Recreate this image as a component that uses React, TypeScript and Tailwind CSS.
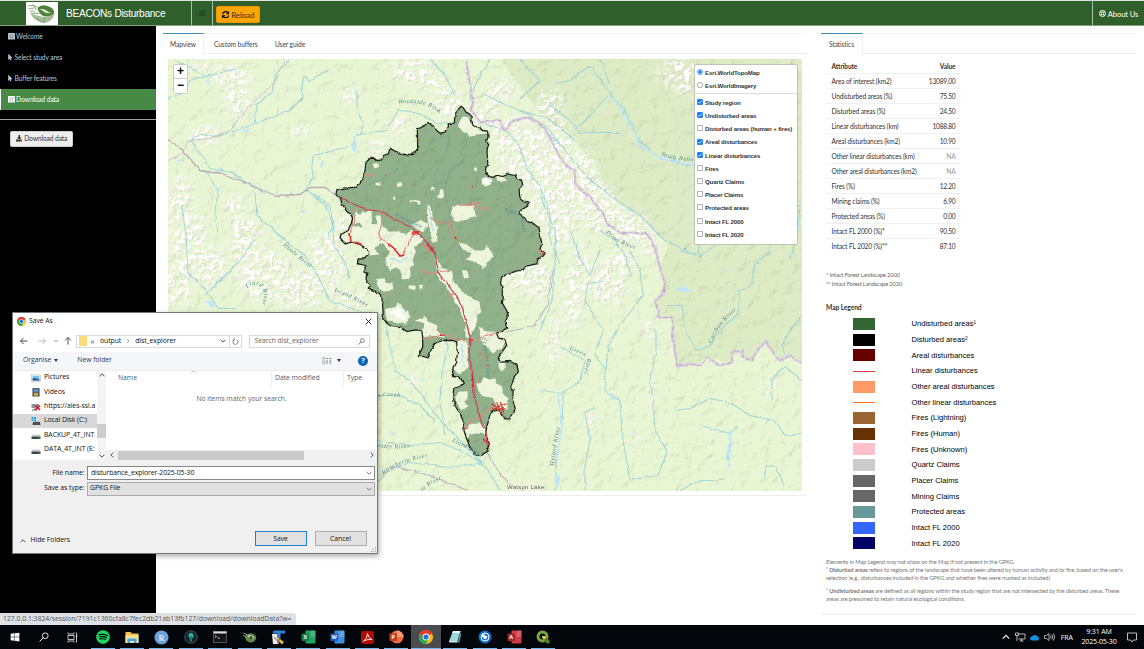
import React from "react";
import {
  FaBars,
  FaDownload,
  FaMousePointer,
  FaRegLifeRing,
  FaSpotify,
  FaSync,
  FaWindows,
} from "react-icons/fa";

const LATO = "font-['Lato','Noto_Sans',sans-serif]";
const SEGOE = "font-['Open_Sans','Noto_Sans',sans-serif]";
const ARIAL = "font-['Liberation_Sans',Arial,sans-serif]";

/* ---------- map ---------- */

const REGION =
  "423,47 430,52 438,65 448,70 457,80 452,90 456,102 470,112 480,112 488,120 503,122 504,140 500,150 506,165 501,180 503,215 508,225 497,230 497,250 510,258 517,262 530,254 548,258 565,251 585,255 592,265 605,270 608,285 597,298 600,322 612,332 630,335 622,348 605,356 598,370 612,378 620,392 640,400 657,412 662,440 665,460 660,478 675,490 668,498 655,505 650,520 620,527 605,540 585,543 560,550 545,563 541,580 550,590 543,605 550,620 547,638 560,660 565,675 555,695 560,710 545,725 530,727 535,742 555,748 560,765 548,782 535,802 545,815 570,813 590,820 595,842 582,860 575,885 570,892 580,900 578,920 588,950 580,970 568,985 555,985 543,965 530,957 520,960 510,975 500,1010 497,1030 503,1048 508,1060 500,1085 485,1092 472,1095 462,1090 450,1070 440,1045 432,1020 433,1000 420,970 405,945 400,920 405,892 418,888 430,878 420,860 398,858 395,845 410,815 412,785 410,755 400,750 370,750 345,758 335,775 325,802 310,798 295,798 308,770 308,740 305,720 290,718 260,723 245,712 215,708 200,698 190,682 188,645 185,615 165,602 145,593 150,585 140,575 143,548 135,545 135,525 112,520 115,505 130,505 147,490 140,475 120,462 105,457 92,455 75,460 60,445 63,432 85,420 98,385 85,365 65,340 62,320 48,312 50,298 70,293 110,290 120,275 132,262 138,215 155,200 168,210 185,208 190,195 205,190 210,173 225,182 250,192 280,192 293,178 292,115 308,110 325,95 345,115 360,128 375,125 385,100 403,98 405,70";

const CLEARINGS = [
  "415,95 430,78 445,80 452,98 470,115 485,122 503,122 500,130 470,132 450,138 430,125 418,110",
  "158,220 172,218 175,230 162,234",
  "231,276 243,276 243,289 231,288",
  "169,277 183,276 182,285 170,285",
  "219,319 227,319 227,328 220,328",
  "270,329 300,331 302,342 292,342 290,336 270,336",
  "462,231 471,231 471,242 461,241",
  "335,288 344,290 344,301 335,299",
  "350,318 358,312 360,296 370,296 372,322 358,325",
  "323,346 335,350 338,380 351,410 352,450 338,458 328,410 320,370",
  "397,350 415,343 462,345 467,375 440,388 410,394 401,390 393,370",
  "485,265 500,258 515,268 512,282 498,288 486,278",
  "530,256 555,262 562,270 545,275 530,268",
  "98,385 110,358 120,378 126,364 155,361 156,400 168,402 168,378 182,378 184,402 195,408 205,423 240,423 260,433 275,418 300,430 307,450 282,472 288,482 278,508 282,522 270,532 272,565 245,566 245,540 225,530 210,542 196,510 210,484 180,457 165,474 178,492 147,495 135,470 105,457 92,455 66,456 61,445 63,432 85,420 92,405 130,412 118,395 100,402",
  "275,402 300,392 323,395 325,412 308,425 290,415",
  "415,455 440,462 465,480 490,480 500,463 517,490 522,500 500,517 490,537 470,517 440,507 455,488 430,480",
  "345,495 364,530 396,542 402,575 420,594 446,618 478,636 484,665 470,675 474,692 460,722 446,745 436,738 436,700 420,660 402,625 380,590 352,558",
  "195,655 225,650 235,635 250,655 272,675 258,702 220,692 200,690",
  "288,690 318,676 324,692 352,705 350,720 377,742 340,736 310,740 306,718 313,700",
  "265,585 285,585 282,597 267,595",
  "298,583 308,583 308,595 298,594",
  "168,565 197,563 197,577 222,580 217,600 188,604 173,590",
  "410,752 442,752 445,830 420,852 403,838 410,800",
  "478,710 500,723 522,723 537,745 557,750 547,772 520,788 498,765 483,752",
  "468,878 483,878 490,860 512,868 527,863 528,878 547,888 548,908 562,923 563,958 533,952 518,922 488,917 476,902",
  "406,920 418,903 443,903 443,925 432,937 448,946 425,960 408,938",
  "450,1000 490,1000 498,1030 475,1025 450,1035 440,1045 433,1020",
  "535,815 555,815 558,830 545,842 536,832",
  "425,538 442,540 447,562 432,564",
];

const RIVERS_A = [
  "M110,0 L112,60 Q150,130 104,135 L100,165 L60,175 L20,185 L-20,195 L-25,230 L-20,260 L-45,300 L0,320 L30,350 L40,400 L25,440",
  "M104,135 L200,120 Q215,90 235,60 Q300,60 350,100 L385,95",
  "M330,160 L390,130 L385,170 L345,250 L342,290 L330,350 L340,400 L335,450 L345,485",
  "M415,180 L440,200 L390,240 L375,290 L385,350 L395,390 L400,430 L420,460 L430,520 L440,580",
  "M240,230 L200,260 L150,280 L135,300 L160,350",
  "M490,10 L550,40 L620,70 L680,110 L720,160",
  "M480,95 L560,120 L600,170 L620,230 L660,290 L690,370 L690,450 L720,520",
  "M560,290 L575,260 M550,330 L590,380 L600,440 L560,480 L530,490 L500,560",
  "M180,490 L250,520 L280,540 M220,520 L260,560",
];

const RIVERS_PAGE = [
  "M290,59 L276,72 L272,92 L257,104 L254,124 L218,136 L200,134 L188,141",
  "M254,124 L275,115 L290,110 L302,98 L303,75 L310,80 L330,68",
  "M168,98 L185,92 L190,80 L205,76 L232,70",
  "M175,60 L205,75",
  "M192,141 L205,160 L210,168 L232,172 L250,185 L265,193",
  "M205,170 L218,190 L215,220 L218,232",
  "M255,192 L257,215 L285,240 L305,255 L318,275 L330,300 L385,320 L395,370 L410,380 L440,420 L460,440 L487,468 L500,490",
  "M182,205 L186,235 L188,273 L205,288 L218,308 L235,308",
  "M205,295 L240,260 L254,240",
  "M308,190 L325,205 L333,225 L334,245 L345,262 L350,278",
  "M378,395 L400,395 L420,405 L435,420",
  "M378,440 L410,445 L440,442 L465,452 L485,465",
  "M378,475 L410,462 L450,467 L485,462",
  "M420,302 L430,310 L448,345 L442,372 L440,400 L445,435",
  "M520,59 L540,80 L520,98",
  "M555,83 L570,80 L590,65 L612,95 L625,110 L640,140 L655,155 L685,165 L720,160",
  "M600,59 L610,85 M550,105 L570,120 L580,132 L620,132 M608,95 L590,115 L575,130",
  "M540,125 L565,150 L585,175 L610,195 L640,215 L665,240 L700,256 L720,240 L760,225",
  "M540,195 L555,230 L556,250 L552,300 L540,330",
  "M570,230 L580,258 L590,275 L600,250 M604,281 L588,283 L585,300 L603,330 L595,355 L605,368 L605,390 L620,400 L622,435 L630,479 L658,475 L667,450 L655,430 L652,390 L650,378 L656,350 L656,330 L650,328",
  "M630,250 L640,270 L643,295 L620,325 L608,345 L606,370",
  "M600,230 L615,240 L625,255 L631,275",
  "M680,250 L697,255 L700,240 M770,250 L755,265 L752,285 L740,290 L738,313 L720,330 L710,346 L697,350 L685,330 L682,305 L665,305",
  "M802,315 L790,330 L782,345 L786,355",
  "M676,410 L690,408 L710,398 L730,402 L750,415 L775,420 L785,435 L802,433",
  "M704,426 L730,433 L737,425",
  "M540,390 L563,393 L562,425 L556,460 L556,490",
  "M563,393 L580,380 L585,360 L560,346",
  "M585,490 L585,465 L590,440 L585,412 L595,407",
  "M680,490 L700,480 L715,480 L725,478 M765,480 L766,465 L777,467 L784,485",
  "M772,400 L772,378 L785,366 L802,380",
  "M470,100 L475,85 L480,75 L490,59 M520,110 L548,118 L575,140",
  "M800,200 L798,230 L790,260 M430,59 L445,75 L455,95",
];

const LAKES =
  "M354,140 L357,140 L356,152 L353,150 Z M352,80 l4,4 l-3,1z M213,185 l8,4 l-2,3z M206,80 l4,-2 l-2,8z M240,130 l10,-2 l-2,4z M228,70 l6,-3 l2,3z M219,165 l5,4 l-4,1z M729,432 l3,-3 l-1,20 l-3,25 l-1,-16z M556,470 l4,10 l-2,8 l-3,-8z M675,288 l8,-2 l12,6 l-14,-1z M720,262 l8,10 l-3,-2z M725,305 l2,4 l-3,1z M240,108 l4,3 l-2,2z M176,158 l6,2 l-3,2z M300,212 l6,-4 l-2,5z M320,164 l4,-6 l-1,8z M205,300 l12,4 l-6,4z M420,376 l6,5 l-4,-1z M610,395 l8,3 l-7,1z M452,228 l3,2 l2,16 l-3,-8z M430,233 l2,12 l-2,-4z M390,430 l5,3 l-4,1z M460,305 l3,14 l-2,-2z";

const PEAKS: [number, number, number, number][] = [
  [232, 75, 22, 10], [238, 100, 13, 18], [200, 66, 14, 5], [205, 135, 16, 10],
  [180, 200, 12, 25], [188, 240, 18, 30], [210, 265, 16, 20], [178, 285, 14, 22],
  [245, 240, 16, 26], [265, 275, 30, 26], [235, 205, 10, 10], [300, 290, 24, 20], [320, 250, 12, 16],
  [330, 262, 14, 30], [345, 225, 8, 14], [300, 130, 10, 8], [410, 70, 22, 12], [430, 82, 20, 8], [450, 103, 14, 16],
  [350, 95, 10, 8], [400, 125, 12, 10], [378, 145, 10, 8], [485, 118, 14, 18], [500, 90, 14, 12], [515, 140, 20, 26], [540, 160, 22, 32],
  [515, 165, 16, 12], [545, 198, 16, 28], [560, 150, 14, 30], [580, 180, 18, 30], [600, 210, 22, 26], [628, 225, 22, 16], [650, 245, 10, 12],
  [560, 218, 14, 30], [580, 270, 10, 28], [608, 285, 18, 22], [572, 300, 10, 30], [553, 340, 6, 28], [620, 260, 14, 14],
  [520, 270, 14, 24], [540, 280, 10, 20], [680, 72, 22, 14], [690, 88, 14, 8], [771, 387, 5, 12], [648, 330, 5, 12], [795, 62, 10, 4], [550, 105, 14, 16],
  [650, 395, 4, 12], [636, 440, 3, 16], [590, 420, 4, 12], [390, 302, 10, 6], [397, 313, 8, 6], [410, 380, 10, 6], [350, 300, 14, 12],
];

const BOUNDARY =
  "M466,59 L473,102 L472,110 L480,122 L500,120 L505,130 L513,120 L527,117 L540,122 L550,137 L562,160 L570,168 L575,170 L575,183 L590,197 L603,213 L607,223 L620,232 L647,233 L655,247 L660,267 L665,283 L663,293 L656,300 L659,317 L672,317 L673,333 L675,353 L678,366 L690,363 L700,365 L707,357 L720,365 L732,362 L732,352 L743,350 L743,357 L752,360 L757,350 L766,341 L773,352 L780,360 L790,355 L802,363";

const ROADS = "65,322 85,335 110,345 145,358 182,362 230,390 270,410 295,430 320,455 345,485 350,520 360,555 385,585 400,602 425,645 440,700 450,740 447,790 458,850 462,910 475,960 485,1000 500,1030 500,1060";

const MINOR_RED = [
  "105,345 103,395 95,410 90,430 92,452 105,457",
  "182,362 186,395 176,430 182,445 205,460 225,475 240,497 252,492 255,475 268,465 270,445 285,430",
  "402,383 390,395 398,425 410,445 420,455",
  "303,540 320,545 335,548 345,545 390,540",
  "330,382 350,390 375,398",
  "417,345 440,343 470,345 475,352 500,355 500,346",
  "452,338 482,338",
  "134,253 160,254 167,262",
  "308,745 340,742 370,730 400,745 450,752 475,750 490,737 530,727",
  "480,785 495,805 500,835",
  "435,1020 437,1005 450,995 480,975 510,955 540,945",
  "650,468 654,480 672,490",
  "300,462 315,468 325,480 345,485",
  "460,890 478,862",
  "395,630 390,615 402,605",
  "200,612 215,611",
];

function RiverName({ id, d, children }: { id: string; d: string; children: string }) {
  return (
    <>
      <path id={id} d={d} fill="none" />
      <text fontSize="6" fontStyle="italic" letterSpacing="0.6" fill="#4f8790" className="font-['Liberation_Serif',serif]">
        <textPath href={"#" + id}>{children}</textPath>
      </text>
    </>
  );
}

function TopoMap() {
  return (
    <svg width="634" height="432" viewBox="168 58.5 634 432" className="block">
      <defs>
        <filter id="relief" x="0" y="0" width="100%" height="100%">
          <feTurbulence type="fractalNoise" baseFrequency="0.09" numOctaves="4" seed="7" result="n" />
          <feDiffuseLighting in="n" surfaceScale="3.4" diffuseConstant="1.32" lightingColor="#fff">
            <feDistantLight azimuth="225" elevation="58" />
          </feDiffuseLighting>
        </filter>
        <filter id="peaks" x="-5%" y="-5%" width="110%" height="110%">
          <feGaussianBlur in="SourceGraphic" stdDeviation="4" result="b" />
          <feTurbulence type="fractalNoise" baseFrequency="0.2" numOctaves="3" seed="11" result="n" />
          <feColorMatrix in="n" type="matrix" values="0 0 0 0 1  0 0 0 0 0.99  0 0 0 0 0.97  8 0 0 0 -3.7" result="t" />
          <feComposite in="t" in2="b" operator="in" result="snow" />
          <feOffset in="snow" dx="0.9" dy="0.9" result="o" />
          <feColorMatrix in="o" type="matrix" values="0 0 0 0 0.66  0 0 0 0 0.64  0 0 0 0 0.56  0 0 0 0.55 0" result="shadow" />
          <feMerge>
            <feMergeNode in="shadow" />
            <feMergeNode in="snow" />
          </feMerge>
        </filter>
        <filter id="rough" x="-5%" y="-5%" width="110%" height="110%">
          <feTurbulence type="fractalNoise" baseFrequency="0.16" numOctaves="2" seed="3" result="n" />
          <feDisplacementMap in="SourceGraphic" in2="n" scale="3.4" xChannelSelector="R" yChannelSelector="G" />
        </filter>
        <clipPath id="frame"><rect x="168" y="58.5" width="634" height="432" /></clipPath>
      </defs>
      <g clipPath="url(#frame)">
        <rect x="168" y="58" width="634" height="433" fill="#e9f6d3" />
        <path
          d="M500,58 L802,58 L802,363 L790,355 L780,359 L766,340 L752,360 L742,356 L741,350 L732,352 L730,362 L707,357 L695,364 L678,366 L673,340 L672,318 L658,317 L656,300 L665,290 L660,268 L668,245 L640,215 L604,195 L600,172 L570,135 L540,113 L530,100 Z"
          fill="#ddecc5"
        />
        <g filter="url(#peaks)">
          {PEAKS.map(([cx, cy, rx, ry], i) => (
            <ellipse key={i} cx={cx} cy={cy} rx={rx} ry={ry} fill="#fff" />
          ))}
        </g>
        <g filter="url(#rough)" fill="none" strokeLinejoin="round">
          <g stroke="#a5d8da" strokeWidth="1.1">
            {RIVERS_PAGE.map((d, i) => <path key={i} d={d} />)}
          </g>
          <g stroke="#a5d8da" strokeWidth="3.2" transform="translate(320 90) scale(0.33333)">
            {RIVERS_A.map((d, i) => <path key={i} d={d} />)}
          </g>
          <path d={LAKES} fill="#bfe8fb" />
          <path d="M558,393 L562,425 L556,460 M610,95 L622,110 L640,145 L660,158 L700,166" stroke="#c0e8f8" strokeWidth="1.8" />
          <path d="M168,139 L180,147 L200,170 L225,174 L250,184 L275,195 L300,194 L310,187 L325,187 L335,194 L340,198" stroke="#b9aebb" strokeWidth="1.3" />
          <path d="M285,59 L272,85 L250,105 L230,130 L210,138 L188,140 L184,152 L168,160" stroke="#cfc2d0" strokeWidth="1" />
          <path d="M486,450 L500,474 L515,487 L525,490 M378,480 L395,466 L430,475 L468,490 M500,333 L535,325 L547,305 L553,270" stroke="#c0b5c2" strokeWidth="1.1" />
          <path d={BOUNDARY} stroke="#ddcfe2" strokeWidth="2.6" />
          <path d={BOUNDARY} stroke="#bfa8c6" strokeWidth="0.9" strokeDasharray="4 2" />
        </g>
        <g filter="url(#rough)">
          <g transform="translate(320 90) scale(0.33333)">
            <polygon points={REGION} fill="#90b189" />
            <g fill="none" stroke="#7ea695" strokeWidth="3">
              {RIVERS_A.slice(2, 5).map((d, i) => <path key={i} d={d} />)}
              <path d="M560,290 L575,260 M550,330 L590,380 L600,440 L560,480 L530,490 L500,560" />
            </g>
            <g fill="#edf6dc">
              {CLEARINGS.map((p, i) => <polygon key={i} points={p} />)}
            </g>
            <path d="M205,665 l25,-8 l6,-12 l10,22 l14,14 l-12,6 l-20,-8z M486,268 l14,-6 l12,8 l-4,12 l-14,-2z" fill="#fdfcf8" />
            <path d="M327,350 L334,395 L338,420 M425,760 L430,830 M210,500 L240,515 L262,500" fill="none" stroke="#bfe2f0" strokeWidth="4" />
            <polygon points={REGION} fill="none" stroke="#1d231d" strokeWidth="3.8" strokeLinejoin="round" />
            <g fill="none" stroke="#e58a7e" strokeWidth="3.4">
              {MINOR_RED.map((p, i) => <polyline key={i} points={p} />)}
            </g>
            <polyline points={ROADS} fill="none" stroke="#cb4a60" strokeWidth="4.2" />
            <g fill="none" stroke="#dc2f2f" strokeWidth="5">
              <path d="M205,460 L225,475 L240,497 L252,494 M90,428 L93,452 M108,456 L124,461 M277,425 L298,424 M402,440 L412,446 M338,484 L348,487 M447,745 L458,753 M664,491 L673,490 M320,462 L335,480 M360,733 L374,733" />
              <path strokeWidth="3.4" d="M515,940 L530,950 L545,945 L560,940 M530,935 L545,975 M540,932 L552,968 M520,955 L555,955 M495,1052 L508,1058 L500,1068 M277,430 L297,430 M486,1045 L500,1055 M455,850 L462,890 M293,145 L295,150 M195,253 L200,256 M455,289 L459,291" />
            </g>
          </g>
        </g>
        <rect x="168" y="58" width="634" height="433" filter="url(#relief)" opacity="0.25" className="mix-blend-multiply" />
        <RiverName id="r1" d="M398,103 Q425,100 438,112 Q444,114 449,92">Woodside River</RiverName>
        <RiverName id="r2" d="M283,245 L318,274">Hoole River</RiverName>
        <RiverName id="r3" d="M247,288 Q258,280 263,290 Q267,297 254,322">Liard River</RiverName>
        <RiverName id="r4" d="M334,291 Q352,297 378,313">Island River</RiverName>
        <RiverName id="r5" d="M395,216 Q412,223 440,238">Finlayson R</RiverName>
        <RiverName id="r6" d="M504,212 Q522,212 521,222 Q522,235 534,252">Tyers River</RiverName>
        <RiverName id="r7" d="M606,232 Q616,245 648,252">Prout River</RiverName>
        <RiverName id="r8" d="M661,154 Q675,163 720,160">South Nahanni</RiverName>
        <RiverName id="r9" d="M712,343 Q718,322 742,306">Caribou River</RiverName>
        <RiverName id="r10" d="M569,349 Q584,354 587,359 Q586,368 576,392">Green River</RiverName>
        <RiverName id="r11" d="M554,465 Q555,445 564,412">Hyland River</RiverName>
        <RiverName id="r12" d="M482,338 Q486,352 487,395">Frances River</RiverName>
        <RiverName id="r13" d="M378,397 Q387,393 414,399">n Creek</RiverName>
        <RiverName id="r14" d="M378,446 Q395,451 426,444">ester River</RiverName>
        <RiverName id="r15" d="M384,474 Q397,461 438,455">Rancheria River</RiverName>
        <RiverName id="r16" d="M452,441 Q470,448 495,468">Liard River</RiverName>
        <RiverName id="r17" d="M422,491 Q430,483 454,473">ia River</RiverName>
        <text x="507" y="488.5" fontSize="6" letterSpacing="0.25" fill="#555" stroke="#f4f8e8" strokeWidth="1" paintOrder="stroke" className="font-['Liberation_Sans',sans-serif]">Watson Lake</text>
      </g>
    </svg>
  );
}

const LAYERS: [string, boolean][] = [
  ["Study region", true], ["Undisturbed areas", true], ["Disturbed areas (human + fires)", false],
  ["Areal disturbances", true], ["Linear disturbances", true], ["Fires", false], ["Quartz Claims", false],
  ["Placer Claims", false], ["Protected areas", false], ["Intact FL 2000", false], ["Intact FL 2020", false],
];

function Check({ on }: { on: boolean }) {
  return (
    <svg width="6" height="6" viewBox="0 0 12 12" className="shrink-0 -translate-y-[1px]">
      <rect x="0.7" y="0.7" width="10.6" height="10.6" rx="1.5" fill={on ? "#0b75ff" : "#fff"} stroke={on ? "#0b75ff" : "#777"} strokeWidth="1.3" />
      {on && <path d="M2.8 6.2 5 8.6 9.4 3.4" stroke="#fff" strokeWidth="1.8" fill="none" />}
    </svg>
  );
}

function Radio({ on }: { on: boolean }) {
  return (
    <svg width="6" height="6" viewBox="0 0 12 12" className="shrink-0 -translate-y-[1px]">
      <circle cx="6" cy="6" r="5.2" fill="#fff" stroke={on ? "#0b75ff" : "#777"} strokeWidth="1.2" />
      {on && <circle cx="6" cy="6" r="3.4" fill="#0b75ff" />}
    </svg>
  );
}

function LayerControl() {
  return (
    <div className={`absolute left-[526px] top-[5px] h-[181px] w-[103.5px] rounded-[2px] border border-[#c0c4b8] bg-white pl-[2px] pt-[2px] text-[6.1px] font-bold leading-none tracking-[-0.14px] text-[#333] ${ARIAL}`}>
      {["Esri.WorldTopoMap", "Esri.WorldImagery"].map((t, i) => (
        <div key={t} className="flex h-[13.2px] items-center gap-[2px] whitespace-nowrap"><Radio on={i === 0} />{t}</div>
      ))}
      <div className="-ml-[2px] mb-[2px] mt-[0.5px] h-px bg-[#ddd]" />
      {LAYERS.map(([t, on]) => (
        <div key={t} className="flex h-[13.2px] items-center gap-[2px] whitespace-nowrap"><Check on={on} />{t}</div>
      ))}
    </div>
  );
}

/* ---------- right column ---------- */

const STATS: [string, string][] = [
  ["Area of interest (km2)", "13089.00"], ["Undisturbed areas (%)", "75.50"], ["Disturbed areas (%)", "24.50"],
  ["Linear disturbances (km)", "1088.80"], ["Areal disturbances (km2)", "10.90"], ["Other linear disturbances (km)", "NA"],
  ["Other areal disturbances (km2)", "NA"], ["Fires (%)", "12.20"], ["Mining claims (%)", "6.90"],
  ["Protected areas (%)", "0.00"], ["Intact FL 2000 (%)*", "90.50"], ["Intact FL 2020 (%)**", "87.10"],
];

const LEGEND: [string, string, boolean?][] = [
  ["Undisturbed areas¹", "bg-[#336633]"], ["Disturbed areas²", "bg-black"], ["Areal disturbances", "bg-[#660000]"],
  ["Linear disturbances", "bg-[#d93a3a]", true], ["Other areal disturbances", "bg-[#ff9966]"],
  ["Other linear disturbances", "bg-[#f97316]", true], ["Fires (Lightning)", "bg-[#996633]"], ["Fires (Human)", "bg-[#663300]"],
  ["Fires (Unknown)", "bg-[#ffc0cb]"], ["Quartz Claims", "bg-[#cccccc]"], ["Placer Claims", "bg-[#666666]"],
  ["Mining Claims", "bg-[#666666]"], ["Protected areas", "bg-[#669999]"], ["Intact FL 2000", "bg-[#3366ff]"], ["Intact FL 2020", "bg-[#000066]"],
];

function StatsPanel() {
  return (
    <div className={`mt-[7px] h-[581.5px] w-[315px] border-b-2 border-t border-b-[#f4f4f4] border-t-[#f6f6f6] text-[#333] ${LATO}`}>
      <div className="flex h-[20px] border-b border-[#eee]">
        <div className="-mt-px flex h-[21px] w-[42px] items-center justify-center border-r border-t-[1.5px] border-r-[#eee] border-t-[#3c8dbc] bg-white pt-[2px] text-[6.6px] tracking-[-0.1px] text-[#444]">Statistics</div>
      </div>
      <div className="ml-[5px] mt-[5px] w-[134.5px] text-[6.6px] leading-none tracking-[-0.12px]">
        <div className="flex h-[14.3px] items-center justify-between pl-[5.5px] pr-[5px] font-bold"><span>Attribute</span><span>Value</span></div>
        {STATS.map(([a, v]) => (
          <div key={a} className="flex h-[15px] items-center justify-between border-t border-[#f1f1f1] pl-[5.5px] pr-[5px]">
            <span className="whitespace-nowrap">{a}</span>
            <span className={v === "NA" ? "text-[#999]" : "tracking-[-0.2px]"}>{v}</span>
          </div>
        ))}
      </div>
      <div className="ml-[5px] mt-[18px] text-[5.8px] leading-[8.5px] tracking-[-0.18px] text-[#666]">
        <div>* Intact Forest Landscape 2000</div>
        <div>** Intact Forest Landscape 2020</div>
      </div>
      <div className="ml-[5px] mt-[14.5px] text-[6.7px] font-bold leading-[9px] tracking-[-0.1px]">Map Legend</div>
      <div className={`ml-[5px] mt-[4.5px] text-[7.6px] leading-none text-black ${ARIAL}`}>
        {LEGEND.map(([t, c, line]) => (
          <div key={t} className="flex h-[15.66px] items-center">
            <span className={`ml-[26.5px] mr-[36.5px] w-[22.5px] ${line ? "h-px" : "h-[12px]"} ${c}`} />
            <span>{t}</span>
          </div>
        ))}
      </div>
      <div className="ml-[5px] mt-[6.5px] whitespace-nowrap text-[5.75px] leading-[8px] tracking-[-0.125px] text-[#777]">
        <div>Elements in Map Legend may not show on the Map if not present in the GPKG.</div>
        <div>¹ <b>Disturbed areas</b> refers to regions of the landscape that have been altered by human activity and/or fire, based on the user's</div>
        <div>selection (e.g., disturbances included in the GPKG and whether fires were marked as included).</div>
        <div className="mt-[5px]">² <b>Undisturbed areas</b> are defined as all regions within the study region that are not intersected by the disturbed areas. These</div>
        <div>areas are presumed to retain natural ecological conditions.</div>
      </div>
    </div>
  );
}

/* ---------- header and sidebar ---------- */

function Logo() {
  return (
    <svg width="32" height="23" viewBox="0 0 96 69" className="bg-white">
      <path d="M14 34 Q20 54 46 62 Q60 66 72 56 Q86 46 84 30 Q70 46 48 44 Q30 42 14 34Z" fill="#a3bd98" />
      <path d="M34 18 Q46 6 64 12 Q86 18 84 34 Q72 46 52 42 Q40 38 34 18Z" fill="#4e8239" />
      <path d="M40 20 Q58 20 64 28 Q72 34 80 30 Q66 37 56 31 Q48 25 40 20Z" fill="#d9e8cf" />
      <path d="M6 12 L22 10 L34 16 M8 20 L24 18 M12 28 Q22 22 28 32 M14 34 L40 34 M46 60 L34 48 M52 62 L56 46 M22 8 L30 24" stroke="#6e9a5d" strokeWidth="2.4" fill="none" />
    </svg>
  );
}

function Header() {
  return (
    <header className="flex h-[26px] shrink-0 items-stretch border-b border-t border-b-[#86a384] border-t-[#dfe6de] bg-[#2f5f2a] text-white">
      <div className="ml-[26px] flex w-[32px] items-center"><Logo /></div>
      <div className={`flex w-[133px] items-center whitespace-nowrap pb-[1px] pl-[8px] pt-[2px] text-[10.2px] tracking-[-0.32px] ${ARIAL}`}>BEACONs Disturbance</div>
      <div className="flex w-[21px] items-center justify-center border-l border-[#a9bfa7] text-[6.5px] text-[#1e3f1b]"><FaBars /></div>
      <div className="flex items-center border-l border-[#a9bfa7] pl-[3px] pt-[3px]">
        <button className={`flex h-[17px] w-[44px] items-center justify-center gap-[2px] rounded-[2px] border border-[#f0940a] bg-[#ffa500] text-[8px] tracking-[-0.15px] text-[#333] ${LATO}`}><FaSync size={7.5} className="text-black" />Reload</button>
      </div>
      <div className={`ml-auto mr-px flex w-[51px] items-center justify-center gap-[2px] border-l border-[#a9bfa7] pl-[1px] pt-[4px] text-[7.6px] tracking-[-0.1px] ${LATO}`}><FaRegLifeRing size={7} className="-mt-[3px]" /><span className="whitespace-nowrap">About Us</span></div>
    </header>
  );
}

function GridIcon() {
  return (
    <svg width="7" height="6.5" viewBox="0 0 14 13" className="shrink-0">
      <rect width="14" height="13" rx="1.2" fill="currentColor" />
      <path d="M0.8 4.2h12.400M0.8 8.5h12.400M4.800 2.5v10M9.200 2.5v10" stroke="#000" strokeOpacity="0.35" strokeWidth="0.9" />
    </svg>
  );
}

function Sidebar() {
  const items: [string, React.ReactNode][] = [
    ["Welcome", <GridIcon key="a" />],
    ["Select study area", <FaMousePointer key="b" size={6.5} className="-ml-[1px]" />],
    ["Buffer features", <FaMousePointer key="c" size={6.5} className="-ml-[1px]" />],
    ["Download data", <GridIcon key="d" />],
  ];
  return (
    <aside className={`w-[156px] shrink-0 bg-black text-[6.65px] tracking-[-0.1px] text-[#b8c7ce] ${LATO}`}>
      {items.map(([t, icon], i) => (
        <div key={t} className={`flex h-[21px] items-center gap-[1px] ${i === 3 ? "border-l border-white bg-[#478a45] pl-[7px] text-white" : "pl-[8px]"}`}>{icon}{t}</div>
      ))}
      <div className="mt-[9px] h-px bg-[#a0a0a0]" />
      <button className="ml-[10px] mt-[10.5px] flex h-[16px] w-[63px] items-center justify-center gap-[2px] whitespace-nowrap rounded-[1.5px] border border-[#ccc] bg-[#eee] text-[#333]"><FaDownload size={6.5} />Download data</button>
    </aside>
  );
}

/* ---------- save dialog ---------- */

function ChromeIcon({ size }: { size: number }) {
  return (
    <svg width={size} height={size} viewBox="0 0 24 24" className="shrink-0">
      <circle cx="12" cy="12" r="12" fill="#fbc116" />
      <path d="M12 12 L1.6 6 A12 12 0 0 1 22.4 6 Z" fill="#e33b2e" />
      <path d="M12 6.5 H22.6 A12 12 0 0 0 1.6 6 L7 14.5Z" fill="#e33b2e" />
      <path d="M1.6 6 A12 12 0 0 0 12 24 L16.8 14.8 L7.2 14.8Z" fill="#2da94f" />
      <circle cx="12" cy="12" r="5.8" fill="#fff" />
      <circle cx="12" cy="12" r="4.4" fill="#1a73e8" />
    </svg>
  );
}

function Chevron({ dir, w = 6, color = "#444" }: { dir: "up" | "down" | "left" | "right"; w?: number; color?: string }) {
  const d = { up: "M1 7 5 3 9 7", down: "M1 3 5 7 9 3", left: "M7 1 3 5 7 9", right: "M3 1 7 5 3 9" }[dir];
  return <svg width={w} height={w} viewBox="0 0 10 10" className="shrink-0"><path d={d} fill="none" stroke={color} strokeWidth="1.6" /></svg>;
}

function Arrow({ kind, color }: { kind: "left" | "right" | "up"; color: string }) {
  const d = { left: "M15 8H1M7 2 1 8l6 6", right: "M1 8h14M9 2l6 6-6 6", up: "M8 15V1M2 7l6-6 6 6" }[kind];
  return <svg width="8" height="8" viewBox="0 0 16 16" className="shrink-0"><path d={d} fill="none" stroke={color} strokeWidth="1.9" /></svg>;
}

function Magnifier({ size, color }: { size: number; color: string }) {
  return <svg width={size} height={size} viewBox="0 0 16 16" className="shrink-0"><circle cx="10" cy="6" r="4.6" fill="none" stroke={color} strokeWidth="1.4" /><path d="M6.6 9.4 1 15" stroke={color} strokeWidth="1.6" /></svg>;
}

function TreeIcon({ kind }: { kind: string }) {
  return (
    <svg width="10" height="10" viewBox="0 0 20 20" className="shrink-0">
      {kind === "pic" && <><rect x="1" y="4" width="18" height="13" fill="#fff" stroke="#8ba0b5" /><rect x="3" y="6" width="14" height="9" fill="#79bff0" /><path d="M3 15 L3 11 Q8 8 17 13 V15Z" fill="#2e5d8a" /></>}
      {kind === "vid" && <><rect x="3" y="2" width="14" height="17" fill="#333b46" /><rect x="6" y="3" width="8" height="7" fill="#5f8fd0" /><rect x="6" y="11" width="8" height="7" fill="#c8a24a" /><path d="M4.5 3v15M15.5 3v15" stroke="#ddd" strokeDasharray="1.5 1.5" /></>}
      {kind === "net" && <><rect x="1" y="6" width="15" height="8" fill="#8b929b" /><path d="M8 14v4M2 18h10" stroke="#666" strokeWidth="2" /><path d="M9 9l9 9M18 9l-9 9" stroke="#d61a1a" strokeWidth="3" /></>}
      {kind === "c" && <><path d="M1 2h4v4H1zM6 2h4v4H6zM1 7h4v3H1zM6 7h4v3H6z" fill="#2aa6e8" /><path d="M4 12h14l1 6H3z" fill="#4b5157" /><path d="M4 12h14l-1-2H6z" fill="#b6bcc2" /></>}
      {kind === "hd" && <><path d="M3 9h14l2 4H1z" fill="#c9cdd1" /><rect x="1" y="13" width="18" height="5" fill="#3d4247" /><rect x="14" y="15" width="3" height="1.5" fill="#4ad35a" /></>}
    </svg>
  );
}

const TREE: [string, string][] = [
  ["pic", "Pictures"], ["vid", "Videos"], ["net", "https://ales-ssl.a"], ["c", "Local Disk (C:)"], ["hd", "BACKUP_4T_INT"], ["hd", "DATA_4T_INT (E:"],
];

function SaveDialog() {
  return (
    <div className={`absolute left-[12px] top-[312px] flex h-[242px] w-[366px] flex-col border border-[#777] bg-white text-[6.85px] leading-none tracking-[-0.05px] text-[#111] shadow-[1px_2px_5px_rgba(0,0,0,0.35)] ${SEGOE}`}>
      <div className="flex h-[17.5px] items-center pl-[4px] pr-[5.5px]">
        <ChromeIcon size={9} /><span className="ml-[3px]">Save As</span>
        <svg width="7" height="7" viewBox="0 0 10 10" className="ml-auto"><path d="M1 1l8 8M9 1 1 9" stroke="#222" strokeWidth="1.4" /></svg>
      </div>
      <div className="flex h-[21px] items-center">
        <div className="flex w-[63px] shrink-0 items-center pl-[7px]">
          <Arrow kind="left" color="#444" /><span className="ml-[10px] flex"><Arrow kind="right" color="#bbb" /></span><span className="ml-[8px] flex"><Chevron dir="down" w={4} /></span><span className="ml-[6px] flex"><Arrow kind="up" color="#444" /></span>
        </div>
        <div className="flex h-[13px] w-[166px] items-center border border-[#d9d9d9]">
          <div className="ml-[2px] h-[9.5px] w-[7.5px] bg-[#fbdb7c]" />
          <span className="ml-[4px] text-[8px] text-[#444]">«</span>
          <span className="ml-[5.500px]">output</span>
          <span className="mx-[5px] flex"><Chevron dir="right" w={4} /></span>
          <span>dist_explorer</span>
          <span className="ml-auto mr-[3px] flex"><Chevron dir="down" /></span>
          <span className="flex h-full w-[12px] items-center justify-center border-l border-[#d9d9d9]">
            <svg width="7" height="7" viewBox="0 0 14 14"><path d="M9.5 3.5A5 5 0 1 1 4.5 3.5M4.5 0.5v3.5h-3.5" fill="none" stroke="#555" strokeWidth="1.4" /></svg>
          </span>
        </div>
        <div className="ml-[7px] flex h-[13px] w-[121px] items-center justify-between border border-[#d9d9d9] pl-[4.5px] pr-[4px] text-[#666]"><span>Search dist_explorer</span><Magnifier size={7} color="#444" /></div>
      </div>
      <div className="flex h-[18.5px] items-center bg-[#f5f6f7] text-[#1f3b63]">
        <span className="ml-[10px]">Organise</span>
        <span className="ml-[3px] border-x-[2.5px] border-t-[3px] border-x-transparent border-t-[#1f3b63]" />
        <span className="ml-[19px]">New folder</span>
        <svg width="10" height="8" viewBox="0 0 20 16" className="ml-auto"><path d="M1 1h5v3H1zM1 6h5v3H1zM1 11h5v3H1z" fill="none" stroke="#999" /><path d="M8 3h4M14 3h5M8 8h4M14 8h5M8 12h4M14 12h5" stroke="#777" strokeWidth="1.6" /></svg>
        <span className="ml-[5px] border-x-[2.5px] border-t-[3px] border-x-transparent border-t-[#333]" />
        <span className="ml-[17.5px] mr-[9px] flex h-[10px] w-[10px] items-center justify-center rounded-full bg-[#0b63b8] text-[7.5px] font-bold text-white">?</span>
      </div>
      <div className="flex h-[90px] overflow-hidden border-t border-[#eee]">
        <div className="-mt-[0.5px] w-[84px] shrink-0 overflow-hidden">
          {TREE.map(([k, t]) => (
            <div key={t} className={`flex h-[14.4px] items-center gap-[3px] whitespace-nowrap pl-[18px] ${k === "c" ? "bg-[#d9d9d9]" : ""}`}><TreeIcon kind={k} />{t}</div>
          ))}
        </div>
        <div className="flex w-[9px] shrink-0 flex-col items-center bg-[#f4f4f4] py-[1px]">
          <Chevron dir="up" /><div className="mt-[46px] h-[14px] w-[9px] bg-[#cdcdcd]" /><div className="mt-auto flex"><Chevron dir="down" /></div>
        </div>
        <div className="flex min-w-0 flex-1 flex-col">
          <div className="relative flex h-[14.5px] items-center whitespace-nowrap text-[#4c607a]">
            <div className="absolute -top-[2px] left-[85px]"><Chevron dir="up" w={5} color="#999" /></div>
            <span className="w-[165px] shrink-0 pl-[12px]">Name</span>
            <span className="flex h-full w-[72px] shrink-0 items-center border-l border-[#eee] pl-[3px]">Date modified</span>
            <span className="flex h-full items-center border-l border-[#eee] pl-[3px]">Type</span>
          </div>
          <div className="mt-[10px] w-[271px] text-center text-[#666]">No items match your search.</div>
          <div className="mt-auto flex h-[10px] items-center bg-[#f0f0f0] pl-[3px] pr-[2px]"><Chevron dir="left" /><div className="ml-[3px] h-[9px] w-[186px] bg-[#c9c9c9]" /><span className="ml-auto flex"><Chevron dir="right" /></span></div>
        </div>
      </div>
      <div className="flex flex-1 flex-col bg-[#f0f0f0] pt-[6px]">
        <div className="flex items-center"><span className="w-[74px] pr-[2.5px] text-right">File name:</span><div className="flex h-[14px] w-[288px] items-center justify-between border border-[#888] bg-white pl-[3px] pr-[2px]"><span className="tracking-[-0.08px]">disturbance_explorer-2025-05-30</span><Chevron dir="down" color="#777" /></div></div>
        <div className="mt-[1.5px] flex items-center"><span className="w-[74px] whitespace-nowrap pr-[2.5px] text-right">Save as type:</span><div className="flex h-[14px] w-[288px] items-center justify-between border border-[#aaa] bg-[#e1e1e1] pl-[2px] pr-[2px]"><span>GPKG File</span><Chevron dir="down" color="#777" /></div></div>
        <div className="mt-auto flex h-[15px] items-center pl-[7px]">
          <span className="mt-[4px] flex"><Chevron dir="up" /></span><span className="ml-[4.5px] mt-[4px]">Hide Folders</span>
          <div className="ml-auto flex h-[15px] w-[52px] items-center justify-center border-[1.5px] border-[#1a7fd6] bg-[#e1e1e1] pt-px">Save</div>
          <div className="ml-[8px] mr-[10.5px] flex h-[15px] w-[52px] items-center justify-center border border-[#adadad] bg-[#e1e1e1] pt-px">Cancel</div>
        </div>
        <div className="flex h-[7px] items-end justify-end"><svg width="7" height="7" viewBox="0 0 7 7"><path d="M5 1h1v1H5zM3 3h1v1H3zM5 3h1v1H5zM1 5h1v1H1zM3 5h1v1H3zM5 5h1v1H5z" fill="#aaa" /></svg></div>
      </div>
    </div>
  );
}

/* ---------- taskbar ---------- */

function OfficeIcon({ letter, front, back }: { letter: string; front: string; back: string }) {
  return (
    <svg width="15" height="14" viewBox="0 0 30 28">
      <rect x="9" y="1" width="20" height="26" rx="2" fill={back} />
      <rect x="19" y="1" width="10" height="13" fill="#fff" opacity="0.18" />
      <rect x="1" y="7" width="15" height="15" rx="1.5" fill={front} />
      <text x="8.5" y="18.5" fontSize="11" fontWeight="bold" fill="#fff" textAnchor="middle" className="font-['Open_Sans',sans-serif]">{letter}</text>
    </svg>
  );
}

const TASKS: React.ReactNode[] = [
  <FaSpotify key="sp" size={14} color="#1ed760" />,
  <svg key="ex" width="14" height="13" viewBox="0 0 28 26"><path d="M1 2h10l3 3h13v19H1z" fill="#f4c04a" /><path d="M1 8h26v16H1z" fill="#fde08d" /><path d="M5 24v-9h18v9h-5v-4h-8v4z" fill="#3fa4e8" /></svg>,
  <svg key="r" width="15" height="15" viewBox="0 0 30 30"><circle cx="15" cy="15" r="14" fill="#6da3dc" /><text x="15" y="21.5" fontSize="18" fill="#fff" textAnchor="middle" className="font-['Liberation_Serif',serif]">R</text></svg>,
  <svg key="gk" width="14" height="14" viewBox="0 0 28 28"><circle cx="14" cy="14" r="12.5" fill="#16262b" stroke="#42545a" strokeWidth="2" /><path d="M14 6a5 5 0 0 1 5 5q0 4-3 6v6h-4v-6q-3-2-3-6A5 5 0 0 1 14 6z" fill="#35b5a5" /><path d="M14 12v12" stroke="#0c1c20" strokeWidth="1.5" /></svg>,
  <svg key="cmd" width="14" height="12" viewBox="0 0 28 24"><rect x="1" y="1" width="26" height="22" fill="#151515" stroke="#999" /><rect x="1" y="1" width="26" height="4" fill="#ddd" /><path d="M4 9l3 2-3 2M9 14h5" stroke="#eee" strokeWidth="1.5" fill="none" /></svg>,
  <svg key="be" width="15" height="13" viewBox="0 0 30 26"><path d="M3 4l8 4M2 9l9 3" stroke="#93ad7e" strokeWidth="2" /><path d="M6 12q5-9 15-7 9 3 7 11-4 8-12 7-9-2-10-11z" fill="#5f8a4b" /><path d="M11 10q8-4 13 3-5 6-13-3z" fill="#dbe7cf" /><circle cx="18" cy="13" r="3" fill="#2b4522" /></svg>,
  <svg key="to" width="15" height="15" viewBox="0 0 30 30"><path d="M2 8h13v20H4z" fill="#eee" /><path d="M5 1h23v6H19v10h-7V7H3z" fill="#2f7fd0" /><path d="M14 15l12 9-4 5-11-10z" fill="#e8b73c" /><path d="M6 14l8 9M18 17l-6 9" stroke="#333" strokeWidth="1.5" /></svg>,
  <OfficeIcon key="xl" letter="X" front="#107c41" back="#21a366" />,
  <OfficeIcon key="wd" letter="W" front="#185abd" back="#3f8fe0" />,
  <svg key="ac" width="13" height="13" viewBox="0 0 26 26"><rect width="26" height="26" rx="4" fill="#b30b00" /><path d="M5 20q8-4 8-15 1 9 9 12-9-1-17 3z" fill="none" stroke="#fff" strokeWidth="1.8" /></svg>,
  <svg key="pp" width="15" height="14" viewBox="0 0 30 28"><circle cx="16" cy="14" r="13" fill="#ed6c47" /><path d="M16 1a13 13 0 0 1 13 13H16z" fill="#ff9b7a" /><rect x="1" y="7" width="15" height="15" rx="1.5" fill="#c43e1c" /><text x="8.5" y="18.5" fontSize="11" fontWeight="bold" fill="#fff" textAnchor="middle" className="font-['Open_Sans',sans-serif]">P</text></svg>,
  <ChromeIcon key="ch" size={14} />,
  <svg key="np" width="14" height="14" viewBox="0 0 28 28"><path d="M10 2h15l-6 20H2z" fill="#9fd3de" /><path d="M10 2h15l-1 4H8z" fill="#e8f4f6" /><path d="M19 25l5-19 3 1-4 18z" fill="#4b8d9b" /><path d="M2 22h17v3H3z" fill="#d7e9ed" /></svg>,
  <svg key="gl" width="14" height="14" viewBox="0 0 28 28"><circle cx="14" cy="14" r="13" fill="#0a6fd0" /><circle cx="14" cy="14" r="8" fill="none" stroke="#fff" strokeWidth="2" /><path d="M7 11q6-5 7 0l5 2-3 6-5-2z" fill="#fff" /></svg>,
  <OfficeIcon key="ax" letter="A" front="#a4262c" back="#d13b45" />,
  <svg key="qg" width="14" height="14" viewBox="0 0 28 28"><circle cx="13" cy="13" r="9" fill="none" stroke="#7ba63a" strokeWidth="6" /><path d="M13 13h6l8 8v6h-5l-9-9z" fill="#4f7f26" /><path d="M12 12h6l3 3-5 4-4-4z" fill="#eec43c" /></svg>,
];

function Taskbar() {
  return (
    <footer className={`relative flex h-[24px] shrink-0 items-stretch bg-[#03060a] text-white ${SEGOE}`}>
      <div className="flex w-[29.3px] items-center justify-center"><FaWindows size={10} /></div>
      <div className="flex w-[29.3px] items-center justify-center"><Magnifier size={10} color="#fff" /></div>
      <div className="flex w-[29.3px] items-center justify-center pr-[1px]"><svg width="11" height="11" viewBox="0 0 22 22"><path d="M2 1v3h12V1M2 21v-3h12v3M2 7h12v8H2zM19 1v20M17 8h4" stroke="#eee" strokeWidth="1.6" fill="none" /></svg></div>
      {TASKS.map((icon, i) => (
        <div key={i} className={`flex w-[29.4px] items-center justify-center ${i === 11 ? "bg-[#4a4c4f]" : ""}`}>
          <div className={`flex h-full items-center justify-center border-b-[1.5px] border-[#76b9ed] pt-[1.5px] ${i === 11 ? "w-full" : "w-[24px]"}`}>{icon}</div>
        </div>
      ))}
      <div className="ml-auto flex items-center text-[7px] leading-none tracking-[-0.05px]">
        <Chevron dir="up" w={8} color="#eee" />
        <svg width="11" height="10" viewBox="0 0 22 20" className="ml-[5px]"><path d="M7 4h13v10H7M13 14v4M9 18h8M1 2h6v5H1zM4 7v11" stroke="#eee" strokeWidth="1.5" fill="none" /></svg>
        <svg width="10" height="7" viewBox="0 0 20 14" className="ml-[4px]"><path d="M4 13a4 4 0 0 1 0-8 6 6 0 0 1 10-1 5 5 0 0 1 2 9z" fill="#1490df" /></svg>
        <svg width="12" height="10" viewBox="0 0 24 20" className="ml-[4px]"><path d="M1 7h4l5-4v14l-5-4H1zM13 7q2 3 0 6M16 5q3 5 0 10M19 3q5 7 0 14" stroke="#ddd" strokeWidth="1.5" fill="none" /></svg>
        <span className="ml-[5px]">FRA</span>
        <div className="ml-[8px] w-[36px] whitespace-nowrap text-center leading-[10.5px] tracking-[-0.15px]"><div>9:31 AM</div><div>2025-05-30</div></div>
        <svg width="10" height="11" viewBox="0 0 20 22" className="ml-[10px] mr-[7px]"><path d="M1 2h18v14h-6l-3 4-3-4H1z" stroke="#eee" strokeWidth="1.6" fill="none" /></svg>
      </div>
      <div className="absolute -top-[12px] left-0 flex h-[12px] w-[296px] items-center whitespace-nowrap rounded-tr-[3px] bg-[#dee1e6] pl-[3px] text-[6.83px] text-[#555]">127.0.0.1:3824/session/7191c1360cfa8c7fec2db21ab13fb127/download/downloadData?w=</div>
    </footer>
  );
}

export default function App() {
  return (
    <div className="relative flex h-[649px] w-[1144px] flex-col overflow-hidden bg-white">
      <Header />
      <div className="flex min-h-0 flex-1">
        <Sidebar />
        <main className="ml-[7px] mt-[7px] h-[463px] w-[644px] border-b border-t border-b-[#eee] border-t-[#f6f6f6]">
          <div className={`flex h-[20px] items-center border-b border-[#eee] text-[6.6px] tracking-[-0.08px] text-[#444] ${LATO}`}>
            <div className="-mt-px flex h-[21px] w-[41px] items-center justify-center border-r border-t-[1.5px] border-r-[#eee] border-t-[#3c8dbc] bg-white pt-[2px]">Mapview</div>
            <span className="ml-[10px] mt-[3px] w-[61px]">Custom buffers</span>
            <span className="mt-[3px]">User guide</span>
          </div>
          <div className="relative ml-[5px] mt-[4.5px] h-[432px] w-[634px]">
            <TopoMap />
            <div className={`absolute left-[5px] top-[5px] w-[15px] rounded-[1.5px] border border-[#c8ccbf] bg-white text-center text-[12px] font-bold leading-[13.5px] text-black ${ARIAL}`}>
              <div className="h-[14px] border-b border-[#ccc]">+</div>
              <div className="h-[14px]">−</div>
            </div>
            <LayerControl />
          </div>
        </main>
        <div className="ml-[14px]"><StatsPanel /></div>
      </div>
      <SaveDialog />
      <Taskbar />
    </div>
  );
}
